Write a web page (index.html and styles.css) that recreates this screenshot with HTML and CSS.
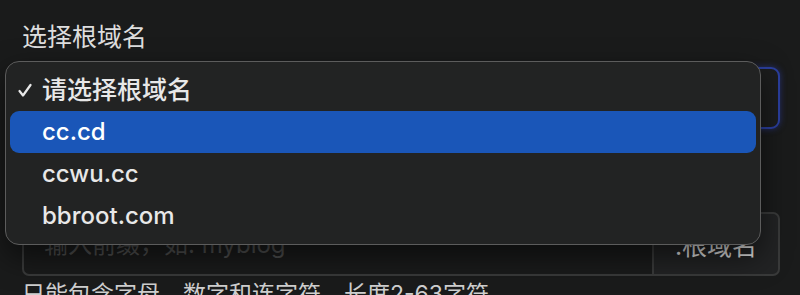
FILE: index.html
```html
<!DOCTYPE html>
<html lang="zh-CN">
<head>
    <meta charset="UTF-8">
    <meta name="viewport" content="width=device-width, initial-scale=1.0">
    <title>选择根域名</title>
    <link rel="stylesheet" href="styles.css">
</head>
<body>
    <div class="form">
        <div class="field">
            <label class="field-label">选择根域名</label>
            <div class="select"></div>
        </div>

        <div class="field">
            <label class="field-label">域名前缀</label>
            <div class="input-group">
                <input type="text" class="prefix-input" placeholder="输入前缀，如: myblog">
                <span class="suffix">.根域名</span>
            </div>
            <p class="hint">只能包含字母、数字和连字符，长度2-63字符</p>
        </div>

        <!-- native select popup, open over the form -->
        <ul class="menu">
            <li class="option checked">
                <svg class="check" width="14" height="15" viewBox="0 0 14 15">
                    <polyline points="1.5,8 5,12.5 12.5,2" fill="none" stroke="#e8e8e8" stroke-width="2.2" stroke-linecap="round" stroke-linejoin="round"/>
                </svg>
                请选择根域名
            </li>
            <li class="option active">cc.cd</li>
            <li class="option">ccwu.cc</li>
            <li class="option">bbroot.com</li>
        </ul>
    </div>
</body>
</html>
```

FILE: styles.css
```css
body {
    margin: 0;
    background-color: #1a1b1b;
    font-family: Inter, "Noto Sans CJK SC", sans-serif;
    color: #e6e6e6;
    height: 295px;
    overflow: hidden;
}

.form {
    position: relative;
    padding: 20px 20px 0 22px;
}

.field-label {
    display: block;
    font-size: 25px;
    line-height: 34px;
    color: #dedede;
}

.select {
    margin-top: 13px;
    height: 58px;
    border: 2px solid #2b3f9e;
    border-radius: 9px;
    background-color: #1c1d1d;
    box-shadow: 0 0 6px rgba(50, 70, 200, 0.5);
}

.field + .field {
    margin-top: 42px;
}

.field:nth-child(2) .field-label {
    visibility: hidden;
}

.input-group {
    display: flex;
    margin-top: 7px;
    height: 64px;
}

.prefix-input {
    flex: 1;
    min-width: 0;
    background-color: #1a1b1b;
    border: 2px solid #393a3a;
    border-right: none;
    border-radius: 7px 0 0 7px;
    padding: 0 20px;
    font-family: inherit;
    font-size: 24px;
    color: #e6e6e6;
}

.prefix-input::placeholder {
    color: #4d4e4e;
}

.suffix {
    width: 124px;
    display: flex;
    align-items: center;
    justify-content: center;
    background-color: #222324;
    border: 2px solid #393a3a;
    border-radius: 0 7px 7px 0;
    font-size: 25px;
    color: #dedede;
}

.hint {
    margin: 3px 0 0;
    font-size: 23px;
    line-height: 30px;
    color: #cfcfcf;
}

.menu {
    position: absolute;
    left: 5px;
    top: 61px;
    width: 746px;
    margin: 0;
    padding: 7px 4px;
    list-style: none;
    background-color: #222323;
    border: 1px solid #5c5c5c;
    border-radius: 14px;
    box-shadow: 0 12px 30px rgba(0, 0, 0, 0.55);
}

.option {
    position: relative;
    height: 42px;
    line-height: 42px;
    padding-left: 32px;
    border-radius: 9px;
    font-size: 24px;
    font-weight: 500;
    color: #e8e8e8;
}

.option.checked {
    font-size: 25px;
}

.option.active {
    background-color: #1a56b8;
    color: #ffffff;
}

.check {
    position: absolute;
    left: 8px;
    top: 14px;
}
```
